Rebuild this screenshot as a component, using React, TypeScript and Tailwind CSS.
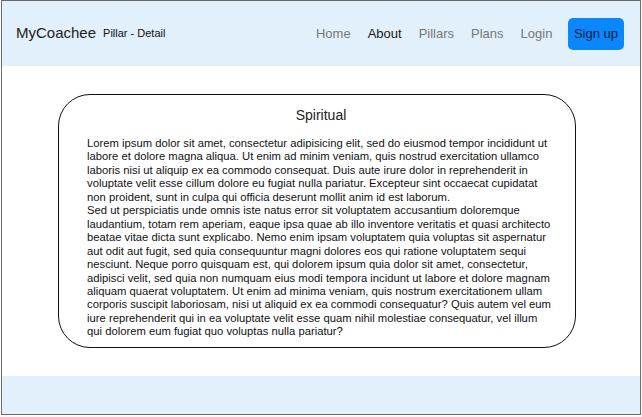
const LOREM =
  "Lorem ipsum dolor sit amet, consectetur adipisicing elit, sed do eiusmod tempor incididunt ut labore et dolore magna aliqua. Ut enim ad minim veniam, quis nostrud exercitation ullamco laboris nisi ut aliquip ex ea commodo consequat. Duis aute irure dolor in reprehenderit in voluptate velit esse cillum dolore eu fugiat nulla pariatur. Excepteur sint occaecat cupidatat non proident, sunt in culpa qui officia deserunt mollit anim id est laborum.";

const SED =
  "Sed ut perspiciatis unde omnis iste natus error sit voluptatem accusantium doloremque laudantium, totam rem aperiam, eaque ipsa quae ab illo inventore veritatis et quasi architecto beatae vitae dicta sunt explicabo. Nemo enim ipsam voluptatem quia voluptas sit aspernatur aut odit aut fugit, sed quia consequuntur magni dolores eos qui ratione voluptatem sequi nesciunt. Neque porro quisquam est, qui dolorem ipsum quia dolor sit amet, consectetur, adipisci velit, sed quia non numquam eius modi tempora incidunt ut labore et dolore magnam aliquam quaerat voluptatem. Ut enim ad minima veniam, quis nostrum exercitationem ullam corporis suscipit laboriosam, nisi ut aliquid ex ea commodi consequatur? Quis autem vel eum iure reprehenderit qui in ea voluptate velit esse quam nihil molestiae consequatur, vel illum qui dolorem eum fugiat quo voluptas nulla pariatur?";

const NAV = [
  { label: "Home", active: false },
  { label: "About", active: true },
  { label: "Pillars", active: false },
  { label: "Plans", active: false },
  { label: "Login", active: false },
];

export default function App() {
  return (
    <div className="h-[417px] w-[642px] bg-white pl-px font-['Liberation_Sans',Arial,sans-serif]">
      <div className="flex h-[415px] w-[640px] flex-col border border-[#6b6b6b] bg-white">
        <header className="flex h-[65px] shrink-0 items-center justify-between bg-[#e1f0fb] pl-[14px] pr-[16px]">
          <div className="flex items-center gap-[7px]">
            <span className="text-[15px] text-[#222]">MyCoachee</span>
            <span className="text-[11px] text-[#111]">Pillar - Detail</span>
          </div>
          <nav className="flex items-center">
            {NAV.map((item) => (
              <a
                key={item.label}
                className={
                  "px-[8.5px] text-[13px] " +
                  (item.active ? "text-[#1a1a1a]" : "text-[#777]")
                }
              >
                {item.label}
              </a>
            ))}
            <button className="ml-[7px] h-[32px] rounded-[5px] bg-[#0b86fb] px-[6px] text-[13px] text-[#0a2344]">
              Sign up
            </button>
          </nav>
        </header>

        <main className="flex flex-1 pl-[56px] pt-[28px]">
          <section className="h-[254px] w-[518px] rounded-[32px] border-[1.5px] border-[#111] pl-[28px] pr-[20px] pt-[10px]">
            <h2 className="text-center text-[14px] text-[#222]">Spiritual</h2>
            <div className="mt-[11px] text-[11.25px] leading-[13.45px] text-[#111]">
              <p>{LOREM}</p>
              <p>{SED}</p>
            </div>
          </section>
        </main>

        <footer className="h-[38px] shrink-0 bg-[#e1f0fb]" />
      </div>
    </div>
  );
}
